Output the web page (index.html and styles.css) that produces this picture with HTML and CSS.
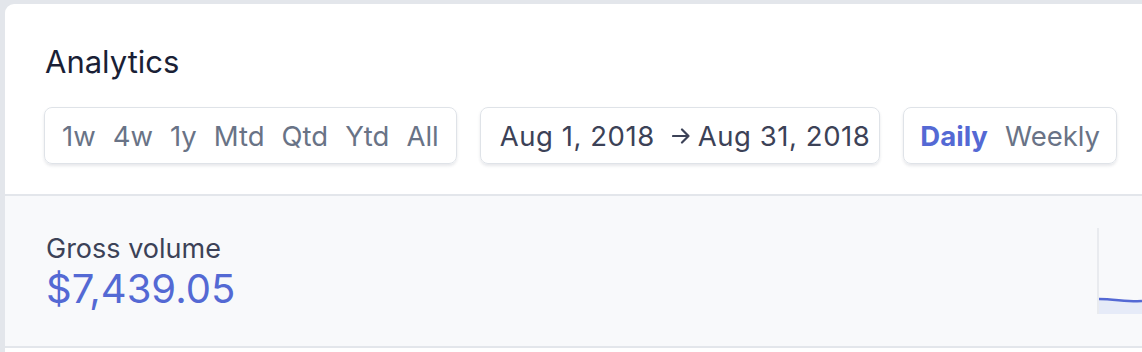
FILE: index.html
```html
<!DOCTYPE html>
<html>
<head>
<meta charset="utf-8">
<link rel="stylesheet" href="styles.css">
</head>
<body>
<div class="card">
  <div class="top">
    <h1 class="title">Analytics</h1>
    <div class="controls">
      <div class="btn ranges">
        <span>1w</span><span>4w</span><span>1y</span><span>Mtd</span><span>Qtd</span><span>Ytd</span><span>All</span>
      </div>
      <div class="btn dates">
        <span>Aug 1, 2018</span>
        <svg class="arrow" width="18" height="16" viewBox="0 0 18 16"><path d="M1 8H16.5M10 1.5L16.5 8L10 14.5" fill="none" stroke="#3c4257" stroke-width="2.2" stroke-linecap="round" stroke-linejoin="round"/></svg>
        <span>Aug 31, 2018</span>
      </div>
      <div class="btn interval">
        <span class="active">Daily</span><span>Weekly</span>
      </div>
    </div>
  </div>
  <div class="metric">
    <div class="metric-text">
      <div class="label">Gross volume</div>
      <div class="value">$7,439.05</div>
    </div>
    <div class="chart">
      <svg width="43" height="86" viewBox="0 0 43 86">
        <path d="M0 71 C15 71 30 74 43 73 L43 86 L0 86 Z" fill="#e6ebf8"/>
        <path d="M0 71 C15 71 30 74 43 73" fill="none" stroke="#5469d4" stroke-width="2.5"/>
      </svg>
    </div>
  </div>
</div>
</body>
</html>
```
FILE: styles.css
```css
html, body {
  margin: 0;
  padding: 0;
}
body {
  background: #e3e6eb;
  width: 1142px;
  height: 352px;
  overflow: hidden;
  font-family: Inter, "Noto Sans", sans-serif;
  padding: 4px 0 0 5px;
  box-sizing: border-box;
}
.card {
  background: #ffffff;
  border-top-left-radius: 9px;
  width: 1137px;
  height: 348px;
  overflow: hidden;
}
.top {
  padding: 40px 0 0 39px;
  box-sizing: border-box;
  border-bottom: 2px solid #e3e6eb;
  height: 192px;
}
.title {
  margin: 0 0 0 1px;
  font-size: 31px;
  font-weight: 400;
  color: #1a1f36;
  line-height: 36px;
}
.controls {
  display: flex;
  gap: 23px;
  margin-top: 27px;
}
.btn {
  display: flex;
  align-items: center;
  height: 57px;
  box-sizing: border-box;
  border: 1px solid #dfe3e8;
  border-radius: 8px;
  box-shadow: 0 2px 3px rgba(60, 66, 87, 0.12);
  padding: 0 17px;
  font-size: 27.5px;
  color: #697386;
  gap: 17px;
}
.dates {
  color: #3c4257;
  gap: 0;
  padding: 0 9px 0 19px;
  letter-spacing: 0.55px;
}
.arrow {
  margin: 0 8px 0 17px;
}
.interval {
  padding: 0 16px;
}
.active {
  color: #5469d4;
  font-weight: 700;
}
.metric {
  background: #f8f9fb;
  height: 150px;
  border-bottom: 2px solid #e3e6eb;
  display: flex;
  justify-content: space-between;
}
.metric-text {
  padding: 37px 0 0 41px;
}
.label {
  font-size: 27px;
  color: #3c4257;
  line-height: 32px;
}
.value {
  font-size: 40px;
  color: #5469d4;
  line-height: 48px;
}
.chart {
  margin-top: 32px;
  border-left: 2px solid #e9ebef;
  height: 86px;
  width: 43px;
}
.chart svg {
  display: block;
}
```
